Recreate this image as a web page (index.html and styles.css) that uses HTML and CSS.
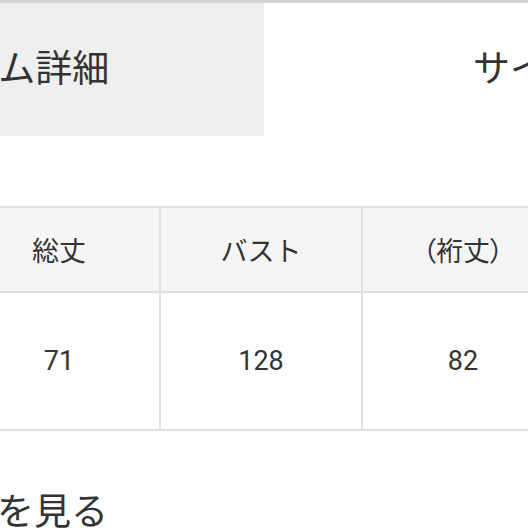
FILE: index.html
```html
<!DOCTYPE html>
<html lang="ja">
<head>
<meta charset="utf-8">
<link rel="stylesheet" href="styles.css">
</head>
<body>
<div class="page">
  <div class="topline"></div>
  <div class="tabs">
    <div class="tab tab-active">アイテム詳細</div>
    <div class="tab">サイズ</div>
  </div>
  <div class="size-table">
    <div class="cell head">総丈</div>
    <div class="cell head">バスト</div>
    <div class="cell head paren">（裄丈）</div>
    <div class="cell head">袖丈</div>
    <div class="cell val">71</div>
    <div class="cell val">128</div>
    <div class="cell val">82</div>
    <div class="cell val">50</div>
  </div>
  <div class="more">詳細を見る</div>
</div>
</body>
</html>
```
FILE: styles.css
```css
html, body {
  margin: 0;
  padding: 0;
  background: #fff;
  overflow: hidden;
}
body {
  width: 528px;
  height: 528px;
  font-family: "Noto Sans CJK JP", "Noto Sans", sans-serif;
  color: #333;
}
.page {
  width: 528px;
  height: 528px;
  overflow: hidden;
}
.topline {
  height: 3px;
  background: #d4d4d4;
}
.tabs {
  display: flex;
  height: 133px;
  margin-left: -264px;
}
.tab {
  flex: 0 0 528px;
  display: flex;
  align-items: center;
  justify-content: center;
  font-size: 37px;
  line-height: 1;
  padding-bottom: 6px;
  box-sizing: border-box;
}
.tab-active {
  background: #efefef;
}
.size-table {
  margin-top: 70px;
  margin-left: -41px;
  display: grid;
  grid-template-columns: repeat(4, 202px);
  border-top: 2px solid #e0e0e0;
  width: 808px;
}
.cell {
  display: flex;
  align-items: center;
  justify-content: center;
  border-right: 2px solid #e0e0e0;
  border-bottom: 2px solid #e0e0e0;
  font-size: 27px;
  line-height: 1;
}
.head {
  height: 83px;
  background: #f5f5f5;
}
.paren {
  font-feature-settings: "palt";
}
.val {
  height: 136px;
  font-family: Roboto, "Noto Sans CJK JP", sans-serif;
  font-size: 27px;
}
.more {
  margin-top: 56px;
  margin-left: -77px;
  font-size: 37px;
  line-height: 1.2;
  white-space: nowrap;
}
```
